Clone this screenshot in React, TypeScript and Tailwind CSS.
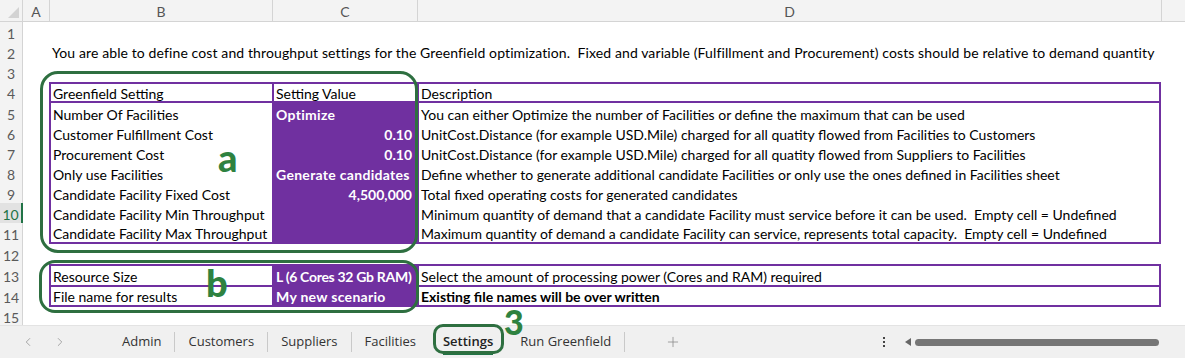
import { ChevronLeft, ChevronRight, Plus } from "lucide-react";

const settings = [
  { name: "Number Of Facilities", value: "Optimize", right: false, h: "h-[20px]", desc: "You can either Optimize the number of Facilities or define the maximum that can be used" },
  { name: "Customer Fulfillment Cost", value: "0.10", right: true, h: "h-[20px]", desc: "UnitCost.Distance (for example USD.Mile) charged for all quatity flowed from Facilities to Customers" },
  { name: "Procurement Cost", value: "0.10", right: true, h: "h-[20px]", desc: "UnitCost.Distance (for example USD.Mile) charged for all quatity flowed from Suppliers to Facilities" },
  { name: "Only use Facilities", value: "Generate candidates", right: false, h: "h-[20px]", desc: "Define whether to generate additional candidate Facilities or only use the ones defined in Facilities sheet" },
  { name: "Candidate Facility Fixed Cost", value: "4,500,000", right: true, h: "h-[20px]", desc: "Total fixed operating costs for generated candidates" },
  { name: "Candidate Facility Min Throughput", value: "", right: false, h: "h-[20px]", desc: "Minimum quantity of demand that a candidate Facility must service before it can be used.  Empty cell = Undefined" },
  { name: "Candidate Facility Max Throughput", value: "", right: false, h: "h-[19px]", desc: "Maximum quantity of demand a candidate Facility can service, represents total capacity.  Empty cell = Undefined" },
];

const rowLabels = [
  { n: 1, h: "h-[20px]" },
  { n: 2, h: "h-[20px]" },
  { n: 3, h: "h-[20px]" },
  { n: 4, h: "h-[21px]" },
  { n: 5, h: "h-[20px]" },
  { n: 6, h: "h-[20px]" },
  { n: 7, h: "h-[20px]" },
  { n: 8, h: "h-[20px]" },
  { n: 9, h: "h-[20px]" },
  { n: 10, h: "h-[20px]" },
  { n: 11, h: "h-[21px]" },
  { n: 12, h: "h-[20px]" },
  { n: 13, h: "h-[22px]" },
  { n: 14, h: "h-[21px]" },
  { n: 15, h: "h-[18px]" },
];

const tabs = ["Admin", "Customers", "Suppliers", "Facilities", "Settings", "Run Greenfield"];

export default function App() {
  return (
    <div className="relative flex h-[358px] w-[1185px] flex-col overflow-hidden bg-white font-[Lato,sans-serif] text-[14px] text-black">
      {/* Column headers */}
      <div className="flex h-[22px] shrink-0 border-b border-[#d4d4d4] bg-[#f3f3f3] text-[#555]">
        <div className="flex w-[23px] items-end justify-end border-r border-[#d4d4d4] pb-[3px] pr-[3px]">
          <svg width="11" height="11" viewBox="0 0 11 11">
            <polygon points="11,0 11,11 0,11" fill="#d3d3d3" />
          </svg>
        </div>
        <div className="flex w-[27px] items-center justify-center border-r border-[#d4d4d4] pt-[2px]">A</div>
        <div className="flex w-[223px] items-center justify-center border-r border-[#d4d4d4] pt-[2px]">B</div>
        <div className="flex w-[145px] items-center justify-center border-r border-[#d4d4d4] pt-[2px]">C</div>
        <div className="flex w-[744px] items-center justify-center border-r border-[#d4d4d4] pt-[2px]">D</div>
        <div className="flex-1" />
      </div>

      <div className="flex flex-1">
        {/* Row numbers */}
        <div className="flex w-[23px] shrink-0 flex-col border-r border-[#d4d4d4] bg-[#f3f3f3] text-[#5a5a5a]">
          {rowLabels.map((r) =>
            r.n === 10 ? (
              <div key={r.n} className={`${r.h} -mr-px flex items-center justify-center border-r-2 border-[#217346] bg-[#e2e2e2] pt-[2px] text-[#217346]`}>
                {r.n}
              </div>
            ) : (
              <div key={r.n} className={`${r.h} flex items-center justify-center pt-[2px]`}>
                {r.n}
              </div>
            )
          )}
        </div>

        {/* Cells */}
        <div className="flex flex-1 flex-col">
          <div className="h-[20px]" />
          <div className="flex h-[20px] items-center whitespace-pre pl-[29px] pt-[1px] tracking-[0.11px]">
            You are able to define cost and throughput settings for the Greenfield optimization.  Fixed and variable (Fulfillment and Procurement) costs should be relative to demand quantity
          </div>
          <div className="h-[20px]" />

          {/* Table a */}
          <div className="ml-[26px] w-[1112px] border-2 border-[#7030a0]">
            <div className="flex h-[19px] border-b-2 border-[#7030a0]">
              <div className="flex w-[223px] items-center border-r-2 border-[#7030a0] pl-[2px] pt-[1px]">Greenfield Setting</div>
              <div className="flex w-[145px] items-center border-r-2 border-[#7030a0] pl-[2px] pt-[1px]">Setting Value</div>
              <div className="flex flex-1 items-center pl-[2px] pt-[1px]">Description</div>
            </div>
            {settings.map((s) => (
              <div key={s.name} className={`flex ${s.h}`}>
                <div className="flex w-[223px] items-center border-r-2 border-[#7030a0] pl-[2px] pt-[2px]">{s.name}</div>
                <div
                  className={`flex w-[145px] items-center whitespace-nowrap border-r-2 border-[#7030a0] bg-[#7030a0] pt-[2px] font-bold text-white ${
                    s.right ? "justify-end pr-[5px]" : "pl-[2px] tracking-[0.3px]"
                  }`}
                >
                  {s.value}
                </div>
                <div className="flex flex-1 items-center whitespace-pre pl-[2px] pt-[2px]">{s.desc}</div>
              </div>
            ))}
          </div>

          <div className="h-[20px]" />

          {/* Table b */}
          <div className="ml-[26px] w-[1112px] border-2 border-[#7030a0]">
            <div className="flex h-[21px] border-b-2 border-[#7030a0]">
              <div className="flex w-[223px] items-center border-r-2 border-[#7030a0] pl-[2px] pt-[2px]">Resource Size</div>
              <div className="flex w-[145px] items-center whitespace-nowrap border-r-2 border-[#7030a0] bg-[#7030a0] pl-[2px] pt-[2px] font-bold tracking-[-0.3px] text-white">
                L (6 Cores 32 Gb RAM)
              </div>
              <div className="flex flex-1 items-center pl-[2px] pt-[2px]">Select the amount of processing power (Cores and RAM) required</div>
            </div>
            <div className="flex h-[18px]">
              <div className="flex w-[223px] items-center border-r-2 border-[#7030a0] pl-[2px] pt-[1px]">File name for results</div>
              <div className="flex w-[145px] items-center whitespace-nowrap border-r-2 border-[#7030a0] bg-[#7030a0] pl-[2px] pt-[1px] font-bold tracking-[0.3px] text-white">
                My new scenario
              </div>
              <div className="flex flex-1 items-center pl-[2px] pt-[1px] font-bold">Existing file names will be over written</div>
            </div>
          </div>
          <div className="flex-1" />
        </div>
      </div>

      {/* Sheet tabs */}
      <div className="flex h-[33px] shrink-0 items-center border-t border-[#e3e3e3] bg-[#f0f0f0] font-['Open_Sans',sans-serif] text-[13px] text-[#333]">
        <div className="flex w-[109px] items-center gap-[18px] pl-[21px] text-[#9a9a9a]">
          <ChevronLeft size={14} strokeWidth={1.5} />
          <ChevronRight size={14} strokeWidth={1.5} />
        </div>
        {tabs.map((t, i) => {
          const active = t === "Settings";
          const nextActive = tabs[i + 1] === "Settings";
          return (
            <div key={t} className="flex items-center">
              <div className={`relative px-[13px] ${active ? "font-semibold text-[#222]" : ""}`}>
                {t}
                {active && <div className="absolute bottom-[-3px] left-[13px] right-[13px] h-[2px] bg-[#217346]" />}
              </div>
              <div className={`h-[20px] w-px ${active || nextActive ? "bg-transparent" : "bg-[#c9c9c9]"}`} />
            </div>
          );
        })}
        <div className="pl-[40px] text-[#8a8a8a]">
          <Plus size={16} strokeWidth={1.2} />
        </div>
        <div className="ml-auto flex items-center pr-[26px]">
          <div className="flex flex-col gap-[2px] pr-[20px]">
            <div className="h-[2px] w-[2px] bg-[#444]" />
            <div className="h-[2px] w-[2px] bg-[#444]" />
            <div className="h-[2px] w-[2px] bg-[#444]" />
          </div>
          <svg width="6" height="8" viewBox="0 0 6 8" className="mr-[4px]">
            <polygon points="6,0 6,8 0,4" fill="#666" />
          </svg>
          <div className="h-[7px] w-[244px] rounded-full bg-[#767676]" />
        </div>
      </div>

      {/* Annotations */}
      <div className="absolute left-[40px] top-[71px] h-[182px] w-[378px] rounded-[18px] border-[3px] border-[#2e6f40]" />
      <div className="absolute left-[39px] top-[260px] h-[53px] w-[380px] rounded-[16px] border-[3px] border-[#2e6f40]" />
      <div className="absolute left-[433px] top-[324px] h-[30px] w-[71px] rounded-[10px] border-[3px] border-[#2e6f40]" />
      <div className="absolute left-[218px] top-[138px] text-[38px] font-black leading-none text-[#2e8240]">a</div>
      <div className="absolute left-[206px] top-[263px] text-[38px] font-black leading-none text-[#2e8240]">b</div>
      <div className="absolute left-[504px] top-[305px] text-[34px] font-black leading-none text-[#2e8240]">3</div>
    </div>
  );
}
